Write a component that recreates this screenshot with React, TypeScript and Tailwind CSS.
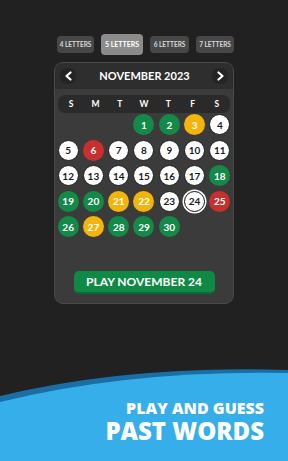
type Day = { n: number; c: 'g' | 'y' | 'r' | 'w' | 's' } | null;

const rows: Day[][] = [
  [null, null, null, { n: 1, c: 'g' }, { n: 2, c: 'g' }, { n: 3, c: 'y' }, { n: 4, c: 'w' }],
  [{ n: 5, c: 'w' }, { n: 6, c: 'r' }, { n: 7, c: 'w' }, { n: 8, c: 'w' }, { n: 9, c: 'w' }, { n: 10, c: 'w' }, { n: 11, c: 'w' }],
  [{ n: 12, c: 'w' }, { n: 13, c: 'w' }, { n: 14, c: 'w' }, { n: 15, c: 'w' }, { n: 16, c: 'w' }, { n: 17, c: 'w' }, { n: 18, c: 'g' }],
  [{ n: 19, c: 'g' }, { n: 20, c: 'g' }, { n: 21, c: 'y' }, { n: 22, c: 'y' }, { n: 23, c: 'w' }, { n: 24, c: 's' }, { n: 25, c: 'r' }],
  [{ n: 26, c: 'g' }, { n: 27, c: 'y' }, { n: 28, c: 'g' }, { n: 29, c: 'g' }, { n: 30, c: 'g' }, null, null],
];

const dayClass = {
  g: 'bg-[#138a47] text-white',
  y: 'bg-[#f3b50b] text-white',
  r: 'bg-[#c8302e] text-white',
  w: 'bg-white text-[#1a1a1a] border border-[#1c1c1c]',
  s: 'bg-white text-[#1a1a1a] border-[1.5px] border-[#111] ring-[1.5px] ring-white',
};

const tabs = [
  { label: '4 LETTERS', cls: 'w-[37px] h-[17px] bg-[#474747] text-[#d8d8d8] text-[6.5px]' },
  { label: '5 LETTERS', cls: 'w-[42px] h-[21px] bg-[#8c8c8c] text-white text-[7px]' },
  { label: '6 LETTERS', cls: 'w-[39px] h-[17px] bg-[#474747] text-[#d8d8d8] text-[6.5px]' },
  { label: '7 LETTERS', cls: 'w-[38px] h-[17px] bg-[#474747] text-[#d8d8d8] text-[6.5px]' },
];

const Chevron = ({ right }: { right?: boolean }) => (
  <div className="w-[16px] h-[16px] rounded-full bg-[#242424] flex items-center justify-center">
    <svg width="9" height="10" viewBox="0 0 9 10">
      <polyline
        points={right ? '2.5,1.5 6.5,5 2.5,8.5' : '6.5,1.5 2.5,5 6.5,8.5'}
        fill="none"
        stroke="white"
        strokeWidth="2.2"
        strokeLinecap="round"
        strokeLinejoin="round"
      />
    </svg>
  </div>
);

export default function App() {
  return (
    <div
      className="w-[288px] h-[461px] bg-[#212121] flex flex-col overflow-hidden"
      style={{ fontFamily: 'Lato, "Noto Sans", sans-serif' }}
    >
      <div className="flex justify-center items-center gap-[7px] pt-[34px] pl-[3px]">
        {tabs.map((t) => (
          <div key={t.label} className={`${t.cls} rounded-[4px] flex items-center justify-center font-bold`}>
            {t.label}
          </div>
        ))}
      </div>

      <div className="mt-[7px] ml-[54px] w-[180px] h-[242px] rounded-[9px] border border-[#4a4a4a] bg-[#3b3b3b] flex flex-col overflow-hidden">
        <div className="h-[26px] bg-[#2e2e2e] flex items-center justify-between px-[5px]">
          <Chevron />
          <div className="text-white font-bold text-[11px] pl-[1px]">NOVEMBER 2023</div>
          <Chevron right />
        </div>

        <div className="mx-[3px] mt-[6px] h-[18px] rounded-[7px] bg-[#2a2a2a] grid grid-cols-7 items-center px-[1px]">
          {['S', 'M', 'T', 'W', 'T', 'F', 'S'].map((d, i) => (
            <div key={i} className="text-center text-white font-bold text-[8.5px]">
              {d}
            </div>
          ))}
        </div>

        <div className="mx-auto w-[177px] mt-[1px] grid grid-cols-7 gap-y-[4.6px]">
          {rows.flat().map((d, i) => (
            <div key={i} className="flex justify-center">
              {d ? (
                <div
                  className={`${dayClass[d.c]} w-[21px] h-[21px] rounded-full flex items-center justify-center font-bold text-[10px] leading-none`}
                >
                  {d.n}
                </div>
              ) : (
                <div className="w-[21px] h-[21px]" />
              )}
            </div>
          ))}
        </div>

        <div className="mt-auto mb-[9px] mx-auto w-[141px] h-[23px] rounded-[5px] bg-[#0f8a46] border-b-2 border-[#0a6b36] flex items-center justify-center text-white font-bold text-[12px]">
          PLAY NOVEMBER 24
        </div>
      </div>

      <div className="relative mt-auto h-[101px]">
        <svg className="absolute inset-0" width="288" height="101" viewBox="0 0 288 101">
          <path d="M0,36 Q130,5 288,10 L288,101 L0,101 Z" fill="#1b6ea4" />
          <path d="M0,42 Q130,10 288,13 L288,101 L0,101 Z" fill="#36aeea" />
        </svg>
        <div
          className="relative flex flex-col items-end pr-[24px] pt-[40px] text-white"
          style={{ fontFamily: '"Open Sans", sans-serif' }}
        >
          <div className="text-[16px] leading-none font-extrabold">PLAY AND GUESS</div>
          <div className="text-[24px] leading-none font-extrabold mt-[3px]">PAST WORDS</div>
        </div>
      </div>
    </div>
  );
}
